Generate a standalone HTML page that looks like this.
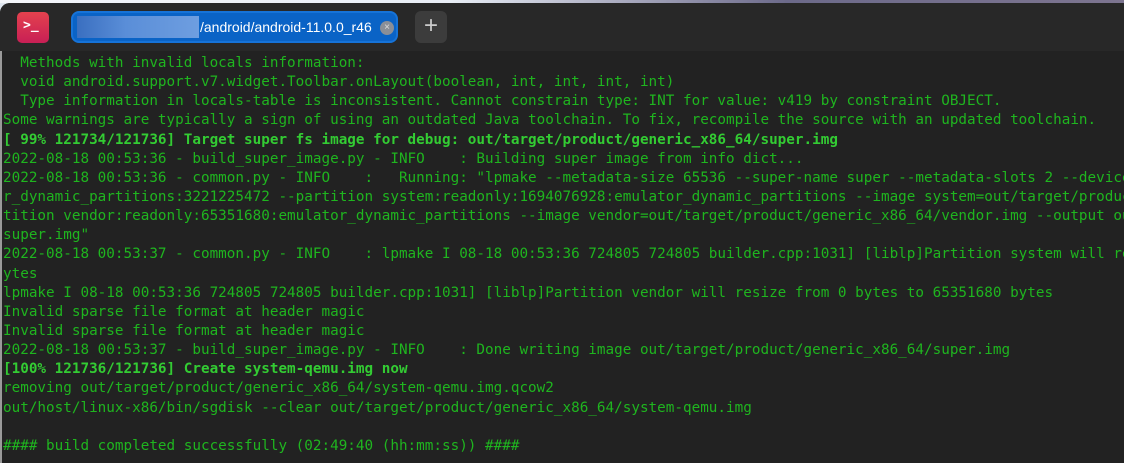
<!DOCTYPE html>
<html><head><style>
html,body{margin:0;padding:0;width:1124px;height:463px;overflow:hidden;background:#dfe6ef;}
.win{position:absolute;left:0;top:3px;width:1124px;height:460px;background:#222;border-top-left-radius:10px;overflow:hidden;}
.top{position:absolute;left:0;top:0;width:1124px;height:3px;background:linear-gradient(90deg,#f4f6fa 0,#e9eef6 40%,#6c6a8a 70%,#7d7590 100%);}
.bar{position:absolute;left:0;top:0;width:1124px;height:48px;background:#282828;}
.icon{position:absolute;left:17px;top:9px;width:32px;height:31px;border-radius:5px;background:linear-gradient(#e4424e,#c81f55);color:#fff;font:bold 13px "DejaVu Sans Mono",monospace;}
.tab{position:absolute;left:71px;top:8px;width:327px;height:32px;border-radius:8px;background:#0a63c6;box-sizing:border-box;border:2px solid #1673d8;}
.blur{position:absolute;left:4px;top:3px;width:122px;height:22px;background:linear-gradient(90deg,#3a6fc0,#5a8ed8 40%,#6e9ee0);}
.tt{position:absolute;left:127px;top:6px;color:#fff;font:14px "Liberation Sans",sans-serif;}
.x{position:absolute;left:307px;top:8px;width:14px;height:14px;border-radius:7px;background:#8a8f98;color:#ddd;font:10px "Liberation Sans";text-align:center;line-height:14px;}
.plus{position:absolute;left:415px;top:8px;width:32px;height:32px;border-radius:6px;background:#3c3c3c;color:#ccc;font:24px "Liberation Sans";text-align:center;line-height:30px;}
.term{position:absolute;left:3px;top:51px;font:14.3px "DejaVu Sans Mono",monospace;color:#1fb51f;}
.l{height:19.15px;line-height:19.15px;white-space:pre;}
.b{font-weight:bold;color:#33cc33;}
.lb{position:absolute;left:0;top:48px;width:2px;height:420px;background:#9a9a9a;}
</style></head><body>
<div class="top"></div>
<div class="win">
<div class="bar"></div>
<div class="icon"><span style="position:absolute;left:6px;top:6px">&gt;_</span></div>
<div class="tab"><div class="blur"></div><div class="tt">/android/android-11.0.0_r46</div><div class="x">×</div></div>
<div class="plus">+</div>
<div class="lb"></div>
<div class="term">
<div class="l">  Methods with invalid locals information:</div>
<div class="l">  void android.support.v7.widget.Toolbar.onLayout(boolean, int, int, int, int)</div>
<div class="l">  Type information in locals-table is inconsistent. Cannot constrain type: INT for value: v419 by constraint OBJECT.</div>
<div class="l">Some warnings are typically a sign of using an outdated Java toolchain. To fix, recompile the source with an updated toolchain.</div>
<div class="l b">[ 99% 121734/121736] Target super fs image for debug: out/target/product/generic_x86_64/super.img</div>
<div class="l">2022-08-18 00:53:36 - build_super_image.py - INFO    : Building super image from info dict...</div>
<div class="l">2022-08-18 00:53:36 - common.py - INFO    :   Running: "lpmake --metadata-size 65536 --super-name super --metadata-slots 2 --device</div>
<div class="l">r_dynamic_partitions:3221225472 --partition system:readonly:1694076928:emulator_dynamic_partitions --image system=out/target/product</div>
<div class="l">tition vendor:readonly:65351680:emulator_dynamic_partitions --image vendor=out/target/product/generic_x86_64/vendor.img --output out</div>
<div class="l">super.img"</div>
<div class="l">2022-08-18 00:53:37 - common.py - INFO    : lpmake I 08-18 00:53:36 724805 724805 builder.cpp:1031] [liblp]Partition system will re</div>
<div class="l">ytes</div>
<div class="l">lpmake I 08-18 00:53:36 724805 724805 builder.cpp:1031] [liblp]Partition vendor will resize from 0 bytes to 65351680 bytes</div>
<div class="l">Invalid sparse file format at header magic</div>
<div class="l">Invalid sparse file format at header magic</div>
<div class="l">2022-08-18 00:53:37 - build_super_image.py - INFO    : Done writing image out/target/product/generic_x86_64/super.img</div>
<div class="l b">[100% 121736/121736] Create system-qemu.img now</div>
<div class="l">removing out/target/product/generic_x86_64/system-qemu.img.qcow2</div>
<div class="l">out/host/linux-x86/bin/sgdisk --clear out/target/product/generic_x86_64/system-qemu.img</div>
<div class="l"> </div>
<div class="l">#### build completed successfully (02:49:40 (hh:mm:ss)) ####</div>
</div>
</div>
</body></html>
